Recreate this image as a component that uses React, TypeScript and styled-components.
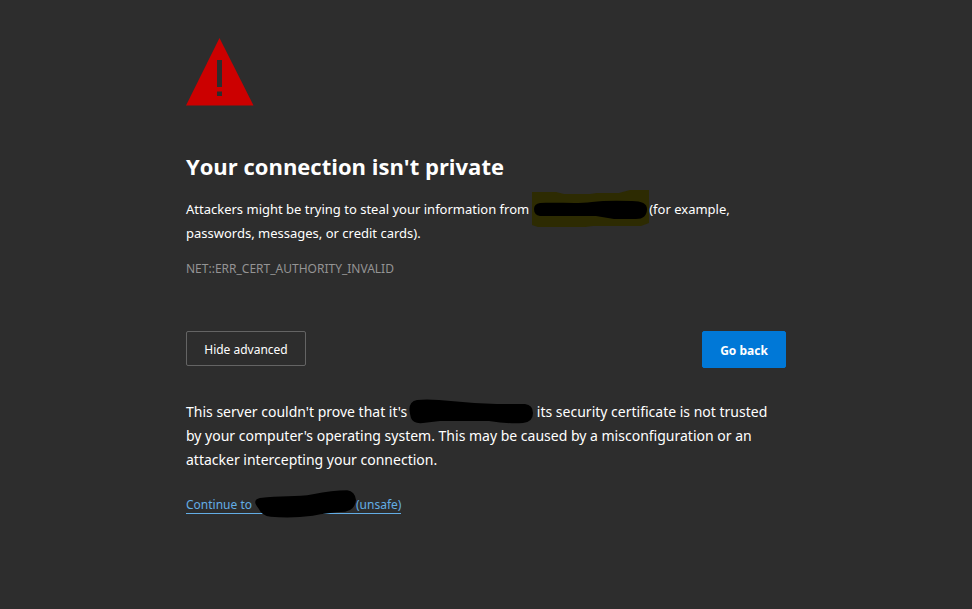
import React from "react";
import styled, { createGlobalStyle } from "styled-components";

const GlobalStyle = createGlobalStyle`
  body {
    margin: 0;
    background: #2d2d2d;
    color: #ffffff;
    font-family: "Segoe UI", "Noto Sans", "Open Sans", sans-serif;
  }
`;

const Page = styled.main`
  box-sizing: border-box;
  max-width: 632px;
  margin: 0 auto;
  padding: 38px 16px;
`;

const WarningIcon = styled.svg`
  display: block;
  width: 68px;
  height: 68px;
`;

const Title = styled.h1`
  margin: 44px 0 0;
  font-family: "Segoe UI", "Open Sans", "Noto Sans", sans-serif;
  font-size: 22px;
  line-height: 32px;
  font-weight: 700;
`;

const Paragraph = styled.p<{ $size: number; $top: number }>`
  max-width: 592px;
  margin: ${(p) => p.$top}px 0 0;
  font-size: ${(p) => p.$size}px;
  line-height: 24px;
`;

const ErrorCode = styled.p`
  margin: 15px 0 0;
  font-size: 12px;
  line-height: 18px;
  color: #949494;
`;

const Actions = styled.div`
  display: flex;
  justify-content: space-between;
  align-items: flex-start;
  margin-top: 53px;
`;

const Button = styled.button<{ $primary?: boolean }>`
  box-sizing: border-box;
  width: ${(p) => (p.$primary ? 84 : 120)}px;
  height: ${(p) => (p.$primary ? 37 : 35)}px;
  padding: 2px 0 0;
  border: 1px solid ${(p) => (p.$primary ? "#0078d7" : "#646464")};
  border-radius: 2px;
  background: ${(p) => (p.$primary ? "#0078d7" : "transparent")};
  color: #ffffff;
  font-family: inherit;
  font-size: 12px;
  font-weight: ${(p) => (p.$primary ? 700 : 400)};
  line-height: 20px;
  cursor: pointer;
`;

const Redaction = styled.svg<{ $width: number; $height: number }>`
  display: inline-block;
  width: ${(p) => p.$width}px;
  height: ${(p) => p.$height}px;
  margin: -14px 0 -10px 2px;
  vertical-align: middle;
`;

const UnsafeLink = styled.a`
  display: inline-block;
  margin-top: 25px;
  border-bottom: 1px solid #63ade5;
  color: #63ade5;
  font-size: 12px;
  line-height: 16px;
  text-decoration: none;
  white-space: nowrap;
`;

export default function App() {
  return (
    <>
      <GlobalStyle />
      <Page>
        <WarningIcon viewBox="0 0 68 68" role="img" aria-label="Warning">
          <path d="M33.5 0 67.5 67.5H0Z" fill="#cc0000" />
          <path d="M31 22h5v27h-5zM31 53.500h5v4.500h-5z" fill="#2d2d2d" />
        </WarningIcon>
        <Title>Your connection isn't private</Title>
        <Paragraph $size={13} $top={15}>
          Attackers might be trying to steal your information from
          <Redaction $width={118} $height={38} viewBox="0 0 118 38" aria-hidden="true">
            <path d="M1 2H25L33 4H59L66 3H88L99 0H118V33L110 36H62L54 37H7L1 35Z" fill="#2d2b02" />
            <path d="M9 13C26 12 46 14 61 12Q76 10 101 11Q116 11 116 19Q116 29 105 29H83L65 26H9Q3 25 3 19Q3 14 9 13Z" fill="#000" />
          </Redaction>
          (for example, passwords, messages, or credit cards).
        </Paragraph>
        <ErrorCode>NET::ERR_CERT_AUTHORITY_INVALID</ErrorCode>
        <Actions>
          <Button type="button">Hide advanced</Button>
          <Button type="button" $primary>
            Go back
          </Button>
        </Actions>
        <Paragraph $size={14} $top={32}>
          This server couldn't prove that it's
          <Redaction $width={124} $height={26} viewBox="0 0 124 26" aria-hidden="true">
            <path d="M8 2Q17 1 30 2Q60 5 88 6H116Q124 7 124 15Q124 24 114 25Q100 26 80 23Q55 23 31 23L14 25Q4 26 2 20Q-3 4 8 2Z" fill="#000" />
          </Redaction>{" "}
          its security certificate is not trusted by your computer's operating system. This may be caused by a
          misconfiguration or an attacker intercepting your connection.
        </Paragraph>
        <UnsafeLink href="#continue">
          Continue to
          <Redaction $width={102} $height={28} viewBox="0 0 104 28" aria-hidden="true">
            <path d="M6 8C25 5 45 7 60 4Q80 0 95 0Q103 1 104 10Q103 20 93 22Q75 23 60 26Q38 29 17 27Q8 26 5 19Q-3 10 6 8Z" fill="#000" />
          </Redaction>
          (unsafe)
        </UnsafeLink>
      </Page>
    </>
  );
}
